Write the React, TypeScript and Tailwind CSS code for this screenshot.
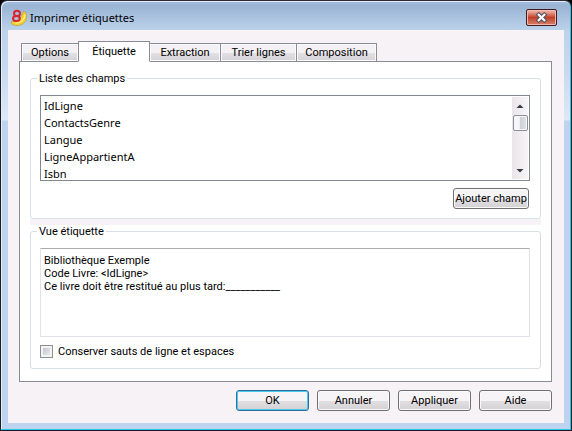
import { useState } from 'react';

const tabs = [
  { name: 'Options', width: 'w-[58px]' },
  { name: 'Étiquette', width: 'w-[72px]' },
  { name: 'Extraction', width: 'w-[72px]' },
  { name: 'Trier lignes', width: 'w-[77px]' },
  { name: 'Composition', width: 'w-[81px]' },
];

const fields = ['IdLigne', 'ContactsGenre', 'Langue', 'LigneAppartientA', 'Isbn'];

const Logo = () => (
  <svg width="18" height="18" viewBox="0 0 18 18" fill="none" aria-hidden="true">
    <path d="M13.6 2.2 L15.4 3 C17.8 8 16.4 12.6 12.5 15 C9 17.2 4.5 17 1.2 14.6 L1.4 12.6 C7 13 10.8 10 13.6 2.2Z" fill="#f2d02f" stroke="#b98f2a" strokeWidth="0.5" />
    <path d="M14.8 5.5 C15.2 9.5 12 13.6 5.5 14.4" stroke="#fff08a" strokeWidth="1.2" />
    <ellipse cx="7" cy="4.4" rx="3" ry="2.6" stroke="#d9232f" strokeWidth="2" />
    <ellipse cx="6.4" cy="9.4" rx="3.4" ry="2.5" stroke="#d9232f" strokeWidth="2" />
  </svg>
);

const Button = ({ label, primary, className }: { label: string; primary?: boolean; className: string }) => (
  <button
    type="button"
    className={`h-[21px] shrink-0 rounded-[3px] border bg-linear-to-b from-[#f6f4f6] from-50% via-[#e2e0e2] via-50% to-[#d3d1d4] text-center leading-[17px] whitespace-nowrap ${
      primary ? 'border-[#2f6f9c] shadow-[inset_0_0_0_1px_#4cc8f0]' : 'border-[#707070] shadow-[inset_0_0_0_1px_#fbfafb]'
    } ${className}`}
  >
    {label}
  </button>
);

const ScrollBar = () => (
  <div className="mr-px flex w-4 shrink-0 flex-col items-center bg-linear-to-r from-[#e9e5e8] to-[#f8f5f8]" aria-hidden="true">
    <svg width="16" height="18" viewBox="0 0 16 18">
      <path d="M8 7.5 L11.5 11 H4.5Z" fill="#3a3a42" />
    </svg>
    <div className="h-4 w-[15px] rounded-[2px] border border-[#8f8f96] bg-linear-to-r from-[#f7f6f8] from-40% via-[#cfd0d8] via-50% to-[#e4e5ea] shadow-[inset_0_0_0_1px_#f7f7f9]" />
    <div className="flex-1" />
    <svg width="16" height="17" viewBox="0 0 16 17">
      <path d="M4.5 7 H11.5 L8 10.5Z" fill="#3a3a42" />
    </svg>
  </div>
);

const App = () => {
  const [active, setActive] = useState('Étiquette');
  const [keepSpaces, setKeepSpaces] = useState(false);
  const [text, setText] = useState(
    'Bibliothèque Exemple\nCode Livre: <IdLigne>\nCe livre doit être restitué au plus tard:___________'
  );

  return (
    <div className="min-h-screen bg-black font-[Roboto,'Liberation_Sans',sans-serif] text-[11px] leading-[13px] text-black">
      <div className="flex min-h-screen flex-col rounded-t-[7px] border border-[#1c1c22] border-t-[#2b2b38] bg-[linear-gradient(to_bottom,#a5bddb_0px,#99b4d4_5px,#bdd3eb_30px,#c6daf1_70px,#dce9f7_119px,#bdd3ef_120px)] px-[6px] pb-[7px] shadow-[inset_-1px_-1px_0_#21c8e8,inset_1px_1px_0_#e4eefa]">
        {/* Title bar */}
        <header className="flex h-[29px] shrink-0 items-center pt-1 pr-2 pl-[3px]">
          <Logo />
          <h1 className="ml-px flex-1 pl-px font-['Noto_Sans',sans-serif] leading-4">Imprimer étiquettes</h1>
          <button
            type="button"
            aria-label="Fermer"
            className="flex h-[17px] w-[31px] items-center justify-center rounded-[2px] border border-[#431b22] bg-linear-to-b from-[#e8a99c] from-10% via-[#c13f28] via-50% to-[#d9806a] shadow-[inset_0_0_0_1px_#efb9ae]"
          >
            <svg width="13" height="11" viewBox="0 0 13 11">
              <path d="M3.7 2.8 L9.3 8.2 M9.3 2.8 L3.7 8.2" stroke="#4b5264" strokeWidth="4.2" strokeLinecap="square" />
              <path d="M3.7 2.8 L9.3 8.2 M9.3 2.8 L3.7 8.2" stroke="#fff" strokeWidth="2.2" strokeLinecap="square" />
            </svg>
          </button>
        </header>

        <main className="mx-px flex flex-1 flex-col bg-[#f7f2f6] pt-[11px] pr-3 pb-3 pl-[11px]">
          <div role="tablist" className="-mb-px ml-[2px] flex items-end">
            {tabs.map((tab) => (
              <button
                key={tab.name}
                type="button"
                role="tab"
                aria-selected={active === tab.name}
                onClick={() => setActive(tab.name)}
                className={`-mr-px border border-[#898c95] text-center whitespace-nowrap ${tab.width} ${
                  active === tab.name
                    ? 'z-10 h-[21px] border-b-white bg-white pb-px'
                    : 'h-[19px] bg-linear-to-b from-[#f4f1f4] from-50% via-[#e4e1e4] via-50% to-[#d6d3d7] shadow-[inset_0_0_0_1px_#fbfafb]'
                }`}
              >
                {tab.name}
              </button>
            ))}
          </div>

          <section className="flex flex-1 flex-col border border-[#898c95] bg-white px-[10px] pt-[10px] pb-3">
            <fieldset className="min-w-0 rounded-[3px] border border-[#d5dfe5] pr-[10px] pb-[9px] pl-[9px]">
              <legend className="-ml-[3px] px-[2px]">Liste des champs</legend>
              <div className="mt-[10px] flex h-[86px] border border-[#828790] py-px">
                <select
                  size={5}
                  aria-label="Liste des champs"
                  className="h-full min-w-0 flex-1 overflow-hidden bg-white pt-px font-['Noto_Sans',sans-serif] outline-none"
                >
                  {fields.map((f) => (
                    <option key={f} className="h-[17px] px-[3px] py-0 leading-[17px]">
                      {f}
                    </option>
                  ))}
                </select>
                <ScrollBar />
              </div>
              <div className="mt-[7px] flex justify-end pr-px">
                <Button label="Ajouter champ" className="w-[76px]" />
              </div>
            </fieldset>

            <div className="h-[6px] shrink-0 bg-[#f7f2f6]" />

            <fieldset className="min-w-0 flex-1 rounded-[3px] border border-[#d5dfe5] pr-[10px] pb-[9px] pl-[9px]">
              <legend className="-ml-[3px] px-[2px]">Vue étiquette</legend>
              <textarea
                aria-label="Vue étiquette"
                value={text}
                onChange={(e) => setText(e.target.value)}
                className="mt-[10px] block h-[89px] w-full resize-none border border-[#e2e3ea] border-t-[#abadb3] px-[3px] pt-[5px] outline-none"
              />
              <label className="mt-2 flex w-fit items-center gap-[5px]">
                <input
                  type="checkbox"
                  checked={keepSpaces}
                  onChange={(e) => setKeepSpaces(e.target.checked)}
                  className="h-[13px] w-[13px] appearance-none border border-[#8e8f8f] bg-linear-to-br from-[#b4b9c4] to-[#f6f6f6] shadow-[inset_0_0_0_2px_#f4f4f4] checked:bg-[#4b6c9e] checked:bg-none"
                />
                Conserver sauts de ligne et espaces
              </label>
            </fieldset>
          </section>

          <footer className="mt-2 flex justify-end gap-2">
            <Button label="OK" primary className="w-[73px]" />
            <Button label="Annuler" className="w-[73px]" />
            <Button label="Appliquer" className="w-[73px]" />
            <Button label="Aide" className="w-[73px]" />
          </footer>
        </main>
      </div>
    </div>
  );
};

export default App;
